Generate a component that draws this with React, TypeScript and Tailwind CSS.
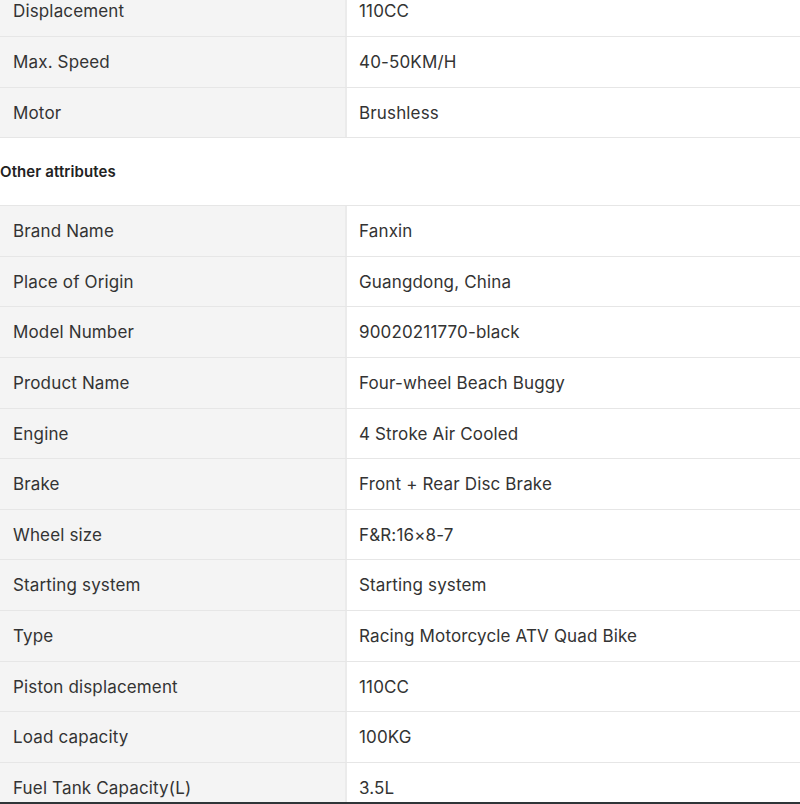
const mainSpecs = [
  ["Displacement", "110CC"],
  ["Max. Speed", "40-50KM/H"],
  ["Motor", "Brushless"],
];

const otherSpecs = [
  ["Brand Name", "Fanxin"],
  ["Place of Origin", "Guangdong, China"],
  ["Model Number", "90020211770-black"],
  ["Product Name", "Four-wheel Beach Buggy"],
  ["Engine", "4 Stroke Air Cooled"],
  ["Brake", "Front + Rear Disc Brake"],
  ["Wheel size", "F&R:16×8-7"],
  ["Starting system", "Starting system"],
  ["Type", "Racing Motorcycle ATV Quad Bike"],
  ["Piston displacement", "110CC"],
  ["Load capacity", "100KG"],
  ["Fuel Tank Capacity(L)", "3.5L"],
];

function SpecTable({ rows, top }: { rows: string[][]; top?: boolean }) {
  return (
    <div className={top ? "border-t border-[#e6e6e6]" : ""}>
      {rows.map(([label, value]) => (
        <div
          key={label}
          className="flex h-[50.6px] border-b border-[#e6e6e6] text-[17px] tracking-[0.15px] text-[#333]"
        >
          <div className="flex w-[347px] items-center border-r-2 border-[#ebebeb] bg-[#f4f4f4] px-[13px] pt-[2px]">
            {label}
          </div>
          <div className="flex flex-1 items-center px-[12px] pt-[2px]">{value}</div>
        </div>
      ))}
    </div>
  );
}

export default function App() {
  return (
    <div
      className="relative h-[804px] w-[800px] overflow-hidden bg-white"
      style={{ fontFamily: "Inter, 'Noto Sans', sans-serif" }}
    >
      <div className="-mt-[13.6px]">
        <SpecTable rows={mainSpecs} />
        <div className="flex h-[67px] items-center pt-[2px]">
          <h4 className="text-[15px] font-semibold tracking-[0.1px] text-[#222]">
            Other attributes
          </h4>
        </div>
        <SpecTable rows={otherSpecs} top />
      </div>
      <div className="absolute bottom-0 left-0 h-[2px] w-full bg-[#2f3538]" />
    </div>
  );
}
